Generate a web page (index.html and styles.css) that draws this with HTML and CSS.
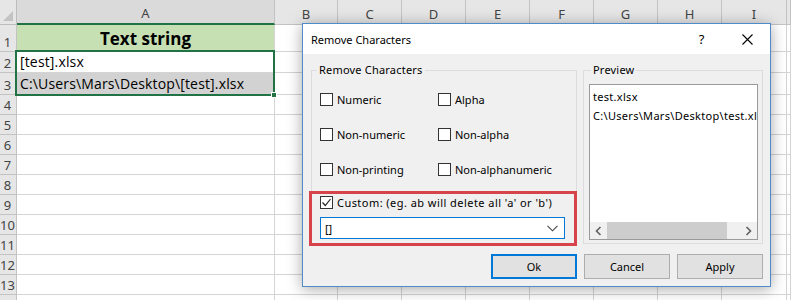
FILE: index.html
```html
<!DOCTYPE html>
<html>
<head>
<meta charset="utf-8">
<title>Remove Characters</title>
<link rel="stylesheet" href="styles.css">
</head>
<body>
<div class="sheet">
  <div class="grid">
    <div class="corner"><span class="tri"></span></div>
    <div class="ch ch-sel">A</div><div class="ch">B</div><div class="ch">C</div><div class="ch">D</div><div class="ch">E</div><div class="ch">F</div><div class="ch">G</div><div class="ch">H</div><div class="ch">I</div><div class="ch"></div>

    <div class="rh">1</div><div class="c a1">Text string</div><div class="c"></div><div class="c"></div><div class="c"></div><div class="c"></div><div class="c"></div><div class="c"></div><div class="c"></div><div class="c"></div><div class="c"></div>
    <div class="rh">2</div><div class="c txt active">[test].xlsx<div class="selection"><span class="handle"></span></div></div><div class="c"></div><div class="c"></div><div class="c"></div><div class="c"></div><div class="c"></div><div class="c"></div><div class="c"></div><div class="c"></div><div class="c"></div>
    <div class="rh">3</div><div class="c txt hl">C:\Users\Mars\Desktop\[test].xlsx</div><div class="c"></div><div class="c"></div><div class="c"></div><div class="c"></div><div class="c"></div><div class="c"></div><div class="c"></div><div class="c"></div><div class="c"></div>
    <div class="rh">4</div><div class="c"></div><div class="c"></div><div class="c"></div><div class="c"></div><div class="c"></div><div class="c"></div><div class="c"></div><div class="c"></div><div class="c"></div><div class="c"></div>
    <div class="rh">5</div><div class="c"></div><div class="c"></div><div class="c"></div><div class="c"></div><div class="c"></div><div class="c"></div><div class="c"></div><div class="c"></div><div class="c"></div><div class="c"></div>
    <div class="rh">6</div><div class="c"></div><div class="c"></div><div class="c"></div><div class="c"></div><div class="c"></div><div class="c"></div><div class="c"></div><div class="c"></div><div class="c"></div><div class="c"></div>
    <div class="rh">7</div><div class="c"></div><div class="c"></div><div class="c"></div><div class="c"></div><div class="c"></div><div class="c"></div><div class="c"></div><div class="c"></div><div class="c"></div><div class="c"></div>
    <div class="rh">8</div><div class="c"></div><div class="c"></div><div class="c"></div><div class="c"></div><div class="c"></div><div class="c"></div><div class="c"></div><div class="c"></div><div class="c"></div><div class="c"></div>
    <div class="rh">9</div><div class="c"></div><div class="c"></div><div class="c"></div><div class="c"></div><div class="c"></div><div class="c"></div><div class="c"></div><div class="c"></div><div class="c"></div><div class="c"></div>
    <div class="rh">10</div><div class="c"></div><div class="c"></div><div class="c"></div><div class="c"></div><div class="c"></div><div class="c"></div><div class="c"></div><div class="c"></div><div class="c"></div><div class="c"></div>
    <div class="rh">11</div><div class="c"></div><div class="c"></div><div class="c"></div><div class="c"></div><div class="c"></div><div class="c"></div><div class="c"></div><div class="c"></div><div class="c"></div><div class="c"></div>
    <div class="rh">12</div><div class="c"></div><div class="c"></div><div class="c"></div><div class="c"></div><div class="c"></div><div class="c"></div><div class="c"></div><div class="c"></div><div class="c"></div><div class="c"></div>
    <div class="rh">13</div><div class="c"></div><div class="c"></div><div class="c"></div><div class="c"></div><div class="c"></div><div class="c"></div><div class="c"></div><div class="c"></div><div class="c"></div><div class="c"></div>
    <div class="rh"></div><div class="c"></div><div class="c"></div><div class="c"></div><div class="c"></div><div class="c"></div><div class="c"></div><div class="c"></div><div class="c"></div><div class="c"></div><div class="c"></div>
  </div>

  <div class="dialog">
    <div class="titlebar">
      <span class="title">Remove Characters</span>
      <span class="tb-btn help">?</span>
      <span class="tb-btn close">
        <svg width="11" height="11" viewBox="0 0 11 11"><path d="M0.5 0.5 L10.5 10.5 M10.5 0.5 L0.5 10.5" stroke="#000" stroke-width="1.1" fill="none"/></svg>
      </span>
    </div>
    <div class="body">
      <div class="groups">
        <fieldset class="group left">
          <legend>Remove Characters</legend>
          <div class="opts">
            <label class="opt"><span class="cb"></span>Numeric</label>
            <label class="opt"><span class="cb"></span>Alpha</label>
            <label class="opt"><span class="cb"></span>Non-numeric</label>
            <label class="opt"><span class="cb"></span>Non-alpha</label>
            <label class="opt"><span class="cb"></span>Non-printing</label>
            <label class="opt"><span class="cb"></span>Non-alphanumeric</label>
          </div>
          <div class="custom">
            <label class="opt custom-label"><span class="cb checked"><svg width="11" height="11" viewBox="0 0 11 11"><path d="M1.5 5.5 L4.3 8.5 L9.5 2" stroke="#222" stroke-width="1.2" fill="none"/></svg></span>Custom: (eg. ab will delete all 'a' or 'b')</label>
            <div class="combo">
              <span class="combo-val">[]</span>
              <svg width="11" height="7" viewBox="0 0 11 7"><path d="M0.5 0.8 L5.5 5.8 L10.5 0.8" stroke="#444" stroke-width="1.1" fill="none"/></svg>
            </div>
          </div>
        </fieldset>
        <fieldset class="group right">
          <legend>Preview</legend>
          <div class="listbox">
            <div class="lines">
              <div class="line">test.xlsx</div>
              <div class="line">C:\Users\Mars\Desktop\test.xlsx</div>
            </div>
            <div class="hscroll">
              <span class="arrow"><svg width="7" height="10" viewBox="0 0 7 10"><path d="M5.5 1 L1.5 5 L5.5 9" stroke="#606060" stroke-width="1.6" fill="none"/></svg></span>
              <span class="thumb"></span>
              <span class="track"></span>
              <span class="arrow"><svg width="7" height="10" viewBox="0 0 7 10"><path d="M1.5 1 L5.5 5 L1.5 9" stroke="#606060" stroke-width="1.6" fill="none"/></svg></span>
            </div>
          </div>
        </fieldset>
      </div>
      <div class="buttons">
        <button class="btn default">Ok</button>
        <button class="btn">Cancel</button>
        <button class="btn">Apply</button>
      </div>
    </div>
  </div>
</div>
</body>
</html>
```

FILE: styles.css
```css
* { box-sizing: border-box; }
body { margin: 0; background: #fff; font-family: "Noto Sans", "Open Sans", sans-serif; overflow: hidden; }
.sheet { position: relative; width: 791px; height: 300px; overflow: hidden; }

.grid {
  display: grid;
  grid-template-columns: 17px 258px 63px repeat(6, 64px) 65px 1fr;
  grid-template-rows: 25px 27px 21px 22px repeat(11, 20px);
}
.grid > div { border-right: 1px solid #d4d4d4; border-bottom: 1px solid #d4d4d4; }

.corner { background: #e6e6e6; position: relative; border-color: #bdbdbd !important; }
.tri { position: absolute; right: 3px; bottom: 3px; width: 0; height: 0; border-left: 10px solid transparent; border-bottom: 10px solid #c3c3c3; }

.ch {
  background: #e6e6e6; border-color: #c3c3c3 !important;
  display: flex; align-items: center; justify-content: center; padding-top: 3px;
  font: 13px "Noto Sans", sans-serif; color: #444;
}
.ch-sel { background: #dadada; border-bottom: 2px solid #217346 !important; }
.rh {
  background: #e6e6e6; border-color: #c3c3c3 !important;
  display: flex; align-items: flex-end; justify-content: center; padding-bottom: 1px;
  font: 13px "Noto Sans", sans-serif; color: #444; line-height: 16px; padding-right: 1px;
}
.c { background: #fff; }
.a1 {
  background: #c6e0b4;
  display: flex; align-items: flex-end; justify-content: center; padding-bottom: 1px;
  font: bold 17px "Open Sans", sans-serif; line-height: 22px; color: #000;
}
.txt { display: flex; align-items: flex-end; padding: 0 0 1px 3px; font: 14px "Open Sans", sans-serif; letter-spacing: 0.15px; line-height: 19px; color: #000; white-space: nowrap; }
.hl { background: #d2d2d2; }
.active { position: relative; }

.selection {
  position: absolute; left: -2px; top: -2px; width: 260px; height: 46px;
  border: 2px solid #217346; pointer-events: none;
}
.handle { position: absolute; right: -4px; bottom: -4px; width: 6px; height: 6px; background: #217346; border: 1px solid #fff; }

/* dialog */
.dialog {
  position: absolute; left: 302px; top: 23px; width: 469px; height: 264px;
  border: 1px solid #4d8cc8; background: #f0f0f0;
  box-shadow: 0 2px 14px rgba(0, 0, 0, 0.35);
  font: 11px "Noto Sans", sans-serif; color: #000;
  display: flex; flex-direction: column;
}
.titlebar { height: 30px; background: #fff; display: flex; align-items: center; padding-left: 8px; }
.title { flex: 1; font-size: 11px; }
.tb-btn { width: 45px; height: 30px; display: flex; align-items: center; justify-content: center; }
.help { font-size: 13px; padding-right: 2px; }

.body { flex: 1; padding: 8px 7px 0 8px; display: flex; flex-direction: column; }
.groups { display: flex; gap: 6px; height: 182px; }
.group { margin: 0; padding: 0; border: 1px solid #dcdcdc; min-width: 0; }
.group legend { padding: 0 2px; line-height: 16px; font-size: 11px; letter-spacing: 0.2px; }
.group.left { width: 266px; }
.group.left legend { margin-left: 5px; }
.group.right { width: 180px; }
.group.right legend { margin-left: 7px; }

.opts { display: grid; grid-template-columns: 118px 1fr; row-gap: 15px; padding: 11px 0 0 8px; }
.opt { display: flex; align-items: center; height: 20px; white-space: nowrap; }
.cb { width: 13px; height: 13px; border: 1px solid #333; background: #fff; margin-right: 4px; display: inline-flex; align-items: center; justify-content: center; flex: none; }

.custom {
  margin: 12px -1px 0 -3px;
  border: 3px solid #d6434a;
  padding: 0 8px 4px 8px;
  display: flex; flex-direction: column; gap: 7px;
}
.custom .opt { height: 16px; }
.custom-label { letter-spacing: 0.45px; }
.combo {
  height: 22px; width: 245px; background: #fff; border: 1px solid #0078d7;
  display: flex; align-items: center; justify-content: space-between; padding: 0 6px 0 4px;
}

.listbox {
  margin: 6px 0 0 5px; width: 169px; height: 156px;
  background: #fff; border: 1px solid #9a9a9a;
  display: flex; flex-direction: column; overflow: hidden;
}
.lines { flex: 1; padding: 2px 0 0 3px; white-space: nowrap; overflow: hidden; letter-spacing: 0.3px; }
.line { line-height: 19px; }
.hscroll { height: 17px; display: flex; background: #f0f0f0; flex: none; }
.arrow { width: 17px; display: flex; align-items: center; justify-content: center; }
.thumb { width: 120px; background: #cdcdcd; }
.track { flex: 1; }

.buttons { display: flex; justify-content: flex-end; gap: 7px; margin-top: 10px; }
.btn {
  width: 86px; height: 25px; background: #e1e1e1; border: 1px solid #adadad;
  font: 11px "Noto Sans", sans-serif; color: #000; padding: 0;
}
.btn.default { border: 2px solid #0078d7; }
```
